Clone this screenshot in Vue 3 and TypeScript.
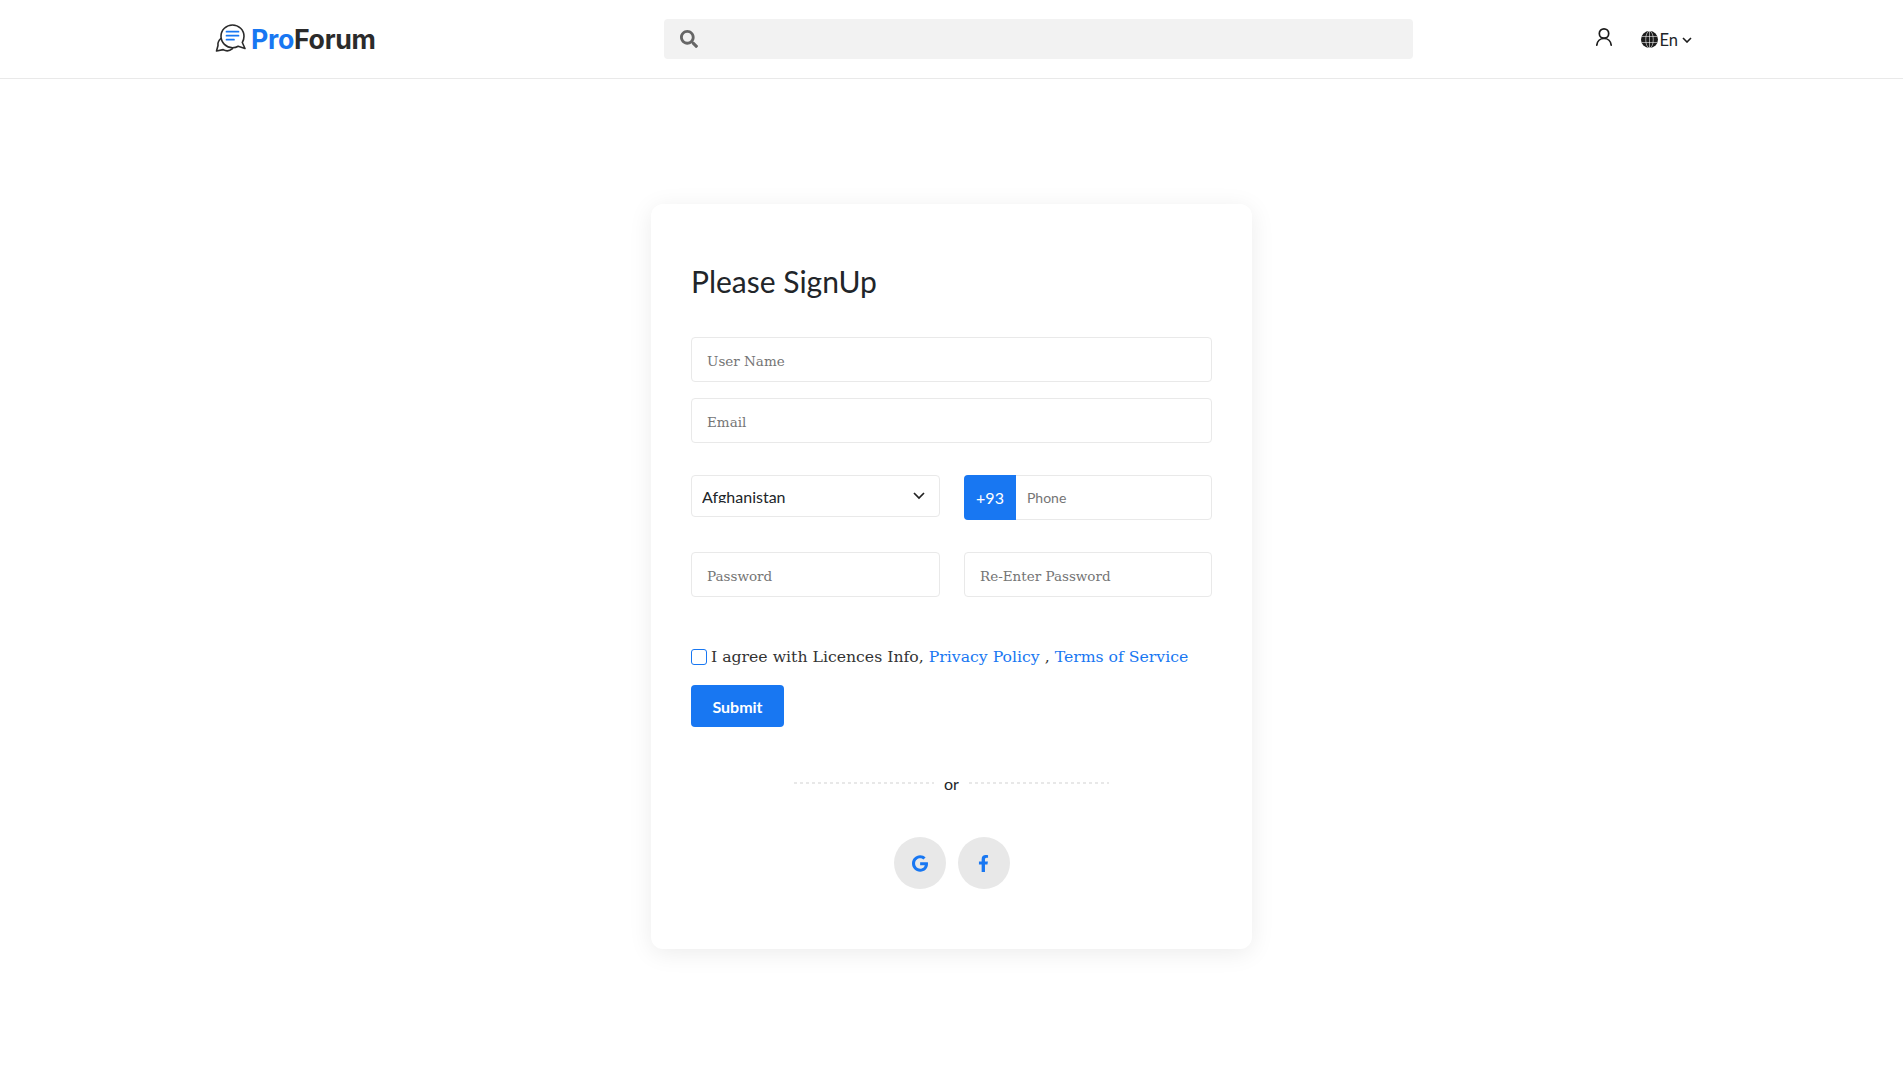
<script setup lang="ts">
import { ref } from 'vue'

const country = ref('Afghanistan')
const countries = ['Afghanistan', 'Albania', 'Algeria']
</script>

<template>
  <div class="page">
    <header class="topbar">
      <a class="brand" href="#">
        <svg class="brand-icon" viewBox="0 0 32 32" width="32" height="32" fill="none" stroke-linejoin="round" stroke-linecap="round" aria-hidden="true">
          <path d="M5.800 15.500 C3.600 17.500 2.600 20 3 22.500 L1.500 28 L8.200 26.600 C10.800 28.200 14.500 28.200 17.500 25.600" stroke="#2b2b2b" stroke-width="1.600" />
          <path d="M17.500 2 C11.200 2 6 7 6 13.300 C6 19.600 11.200 24.700 17.500 24.700 C19.800 24.700 21.600 24.200 23.200 23.200 L30 25.500 L27.300 19.500 C28.400 17.600 29 15.600 29 13.300 C29 7 23.800 2 17.500 2 Z" stroke="#2b2b2b" stroke-width="1.600" />
          <path d="M11.500 8.700 H23.500 M11.500 12.700 H23.500 M11.500 16.700 H19" stroke="#1877f2" stroke-width="1.700" />
        </svg>
        <span class="brand-name"><span class="brand-pro">Pro</span>Forum</span>
      </a>

      <div class="search">
        <svg viewBox="0 0 512 512" width="18" height="18" aria-hidden="true">
          <path fill="#666" d="M505 442.700L405.300 343c-4.500-4.500-10.600-7-17-7H372c27.600-35.300 44-79.700 44-128C416 93.100 322.900 0 208 0S0 93.100 0 208s93.100 208 208 208c48.300 0 92.700-16.400 128-44v16.300c0 6.400 2.500 12.500 7 17l99.700 99.700c9.400 9.400 24.600 9.400 33.900 0l28.300-28.300c9.400-9.400 9.400-24.600.1-34zM208 336c-70.700 0-128-57.200-128-128 0-70.700 57.200-128 128-128 70.700 0 128 57.200 128 128 0 70.700-57.200 128-128 128z" />
        </svg>
        <input class="search-input" type="text" />
      </div>

      <div class="actions">
        <svg class="user-icon" viewBox="0 0 20 20" width="20" height="20" fill="none" stroke="#1c1c1c" stroke-width="1.700" stroke-linecap="round" aria-hidden="true">
          <circle cx="10" cy="6.500" r="4.700" />
          <path d="M2.800 18.200 C3.200 14.300 6 11.500 10 11.500 C14 11.500 16.800 14.300 17.200 18.200" />
        </svg>
        <div class="lang">
          <svg viewBox="0 0 18 18" width="17" height="17" aria-hidden="true">
            <circle cx="9" cy="9" r="9" fill="#1c1c1c" />
            <g fill="none" stroke="#fff" stroke-width="0.600">
              <ellipse cx="9" cy="9" rx="4" ry="9" />
              <path d="M9 0V18M0.500 5.800H17.500M0.500 12.200H17.500" />
            </g>
          </svg>
          <span class="lang-code">En</span>
          <svg class="lang-caret" viewBox="0 0 10 6" width="10" height="6" fill="none" stroke="#1c1c1c" stroke-width="1.600" aria-hidden="true">
            <path d="M1 1l4 4 4-4" />
          </svg>
        </div>
      </div>
    </header>

    <main class="main">
      <form class="card" @submit.prevent>
        <h1 class="title">Please SignUp</h1>

        <input class="field field-gap" type="text" placeholder="User Name" />
        <input class="field" type="email" placeholder="Email" />

        <div class="row row-contact">
          <div class="select-wrap">
            <select v-model="country" class="select">
              <option v-for="c in countries" :key="c">{{ c }}</option>
            </select>
            <svg class="chevron" viewBox="0 0 12 8" width="12" height="8" fill="none" stroke="#222" stroke-width="1.700" aria-hidden="true">
              <path d="M1 1l5 5 5-5" />
            </svg>
          </div>
          <div class="phone">
            <span class="prefix">+93</span>
            <input class="phone-input" type="tel" placeholder="Phone" />
          </div>
        </div>

        <div class="row row-pass">
          <input class="field" type="password" placeholder="Password" />
          <input class="field" type="password" placeholder="Re-Enter Password" />
        </div>

        <label class="agree">
          <input class="check" type="checkbox" />
          <span>I agree with Licences Info, <a href="#">Privacy Policy</a> , <a href="#">Terms of Service</a></span>
        </label>

        <button class="submit" type="submit">Submit</button>

        <div class="divider">
          <span class="dots" />
          <span class="or">or</span>
          <span class="dots" />
        </div>

        <div class="socials">
          <a class="social" href="#" aria-label="Google">
            <svg viewBox="0 0 488 512" width="16" height="17" aria-hidden="true">
              <path fill="#1877f2" d="M488 261.800C488 403.300 391.100 504 248 504 110.800 504 0 393.200 0 256S110.800 8 248 8c66.800 0 123 24.500 166.300 64.900l-67.500 64.900C258.500 52.600 94.300 116.600 94.300 256c0 86.500 69.100 156.600 153.700 156.600 98.200 0 135-70.400 140.800-106.900H248v-85.300h236.100c2.300 12.700 3.900 24.900 3.900 41.400z" />
            </svg>
          </a>
          <a class="social" href="#" aria-label="Facebook">
            <svg viewBox="0 0 320 512" width="11" height="17" aria-hidden="true">
              <path fill="#1877f2" d="M279.140 288l14.220-92.660h-88.910v-60.130c0-25.350 12.420-50.060 52.240-50.060h40.420V6.260S260.430 0 225.360 0c-73.220 0-121.080 44.380-121.080 124.720v70.620H22.890V288h81.390v224h100.170V288z" />
            </svg>
          </a>
        </div>
      </form>
    </main>
  </div>
</template>

<style scoped>
.page {
  min-height: 1074px;
  background: #fff;
  font-family: Lato, "Liberation Sans", sans-serif;
  color: #212529;
}

.topbar {
  height: 79px;
  box-sizing: border-box;
  border-bottom: 1px solid #e9e9e9;
  display: flex;
  align-items: center;
  padding: 0 211px 0 215px;
}

.brand {
  width: 449px;
  display: flex;
  align-items: center;
  gap: 4px;
  text-decoration: none;
}

.brand-name {
  font-family: Inter, "Liberation Sans", sans-serif;
  font-weight: 700;
  font-size: 26.700px;
  letter-spacing: -0.300px;
  color: #2b2b2b;
}

.brand-pro { color: #1877f2; }

.search {
  width: 749px;
  height: 40px;
  box-sizing: border-box;
  background: #f2f2f2;
  border-radius: 4px;
  display: flex;
  align-items: center;
  gap: 8px;
  padding: 0 16px;
}

.search-input {
  flex: 1;
  border: 0;
  outline: 0;
  background: transparent;
}

.actions {
  margin-left: auto;
  display: flex;
  align-items: center;
  gap: 27px;
}

.user-icon { margin-top: -4px; }

.lang {
  display: flex;
  align-items: center;
  gap: 1px;
  font-size: 16.500px;
  color: #212529;
}

.lang-code { margin-top: 1px; }

.lang-caret { margin: 1px 0 0 3px; }

.main {
  display: flex;
  justify-content: center;
  padding-top: 125px;
}

.card {
  width: 601px;
  height: 745px;
  box-sizing: border-box;
  padding: 0 40px;
  background: #fff;
  border-radius: 12px;
  box-shadow: 0 4px 24px rgba(0, 0, 0, 0.08);
  display: flex;
  flex-direction: column;
}

.title {
  margin: 57px 0 0;
  font-weight: 400;
  font-size: 30px;
  line-height: 40px;
  color: #212529;
}

.field {
  width: 100%;
  height: 45px;
  box-sizing: border-box;
  padding: 2px 15px 0;
  border: 1px solid #e9e9e9;
  border-radius: 4px;
  outline: 0;
  background: #fff;
  font-family: "DejaVu Serif", "Liberation Serif", serif;
  font-size: 13.500px;
}

.field-gap { margin: 36px 0 16px; }

.field::placeholder,
.phone-input::placeholder { color: #757575; }

.row {
  display: grid;
  grid-template-columns: 249px 248px;
  column-gap: 24px;
}

.row-contact { margin-top: 32px; align-items: start; }
.row-pass { margin-top: 32px; }

.select-wrap { position: relative; }

.select {
  width: 100%;
  height: 42px;
  box-sizing: border-box;
  padding: 11px 10px 13px;
  appearance: none;
  border: 1px solid #e9e9e9;
  border-radius: 4px;
  background: #fff;
  outline: 0;
  font-family: Lato, sans-serif;
  font-size: 16px;
  color: #212529;
}

.chevron {
  position: absolute;
  right: 15px;
  top: 17px;
  pointer-events: none;
}

.phone {
  display: flex;
  height: 45px;
  box-sizing: border-box;
  border: 1px solid #e9e9e9;
  border-radius: 4px;
}

.prefix {
  width: 52px;
  margin: -1px 0 -1px -1px;
  border-radius: 4px 0 0 4px;
  background: #1877f2;
  color: #fff;
  font-size: 16px;
  display: flex;
  align-items: center;
  justify-content: center;
}

.phone-input {
  flex: 1;
  min-width: 0;
  border: 0;
  outline: 0;
  padding: 0 11px;
  background: transparent;
  font-family: Lato, sans-serif;
  font-size: 14px;
}

.agree {
  margin-top: 50px;
  display: flex;
  align-items: center;
  gap: 4px;
  font-family: "DejaVu Serif", "Liberation Serif", serif;
  font-size: 15.700px;
  line-height: 20px;
  color: #333;
}

.agree a {
  color: #1877f2;
  text-decoration: none;
}

.check {
  width: 16px;
  height: 16px;
  margin: 0;
  appearance: none;
  box-sizing: border-box;
  border: 1.500px solid #1877f2;
  border-radius: 3px;
  background: #fff;
}

.submit {
  width: 93px;
  height: 42px;
  margin-top: 18px;
  border: 0;
  border-radius: 4px;
  background: #1877f2;
  color: #fff;
  font-family: Lato, sans-serif;
  font-weight: 700;
  font-size: 16px;
}

.divider {
  margin-top: 47px;
  display: flex;
  justify-content: center;
  align-items: center;
  gap: 10px;
}

.dots {
  width: 140px;
  height: 2px;
  margin-top: -3px;
  background: repeating-linear-gradient(to right, #e8e8e8 0 3px, transparent 3px 6px);
}

.or { font-size: 16px; line-height: 20px; }

.socials {
  margin-top: 43px;
  display: flex;
  justify-content: center;
  gap: 12px;
}

.social {
  width: 52px;
  height: 52px;
  border-radius: 50%;
  background: #e8e8e8;
  display: flex;
  align-items: center;
  justify-content: center;
}
</style>

<style>
html, body { background: #fff; }
</style>
